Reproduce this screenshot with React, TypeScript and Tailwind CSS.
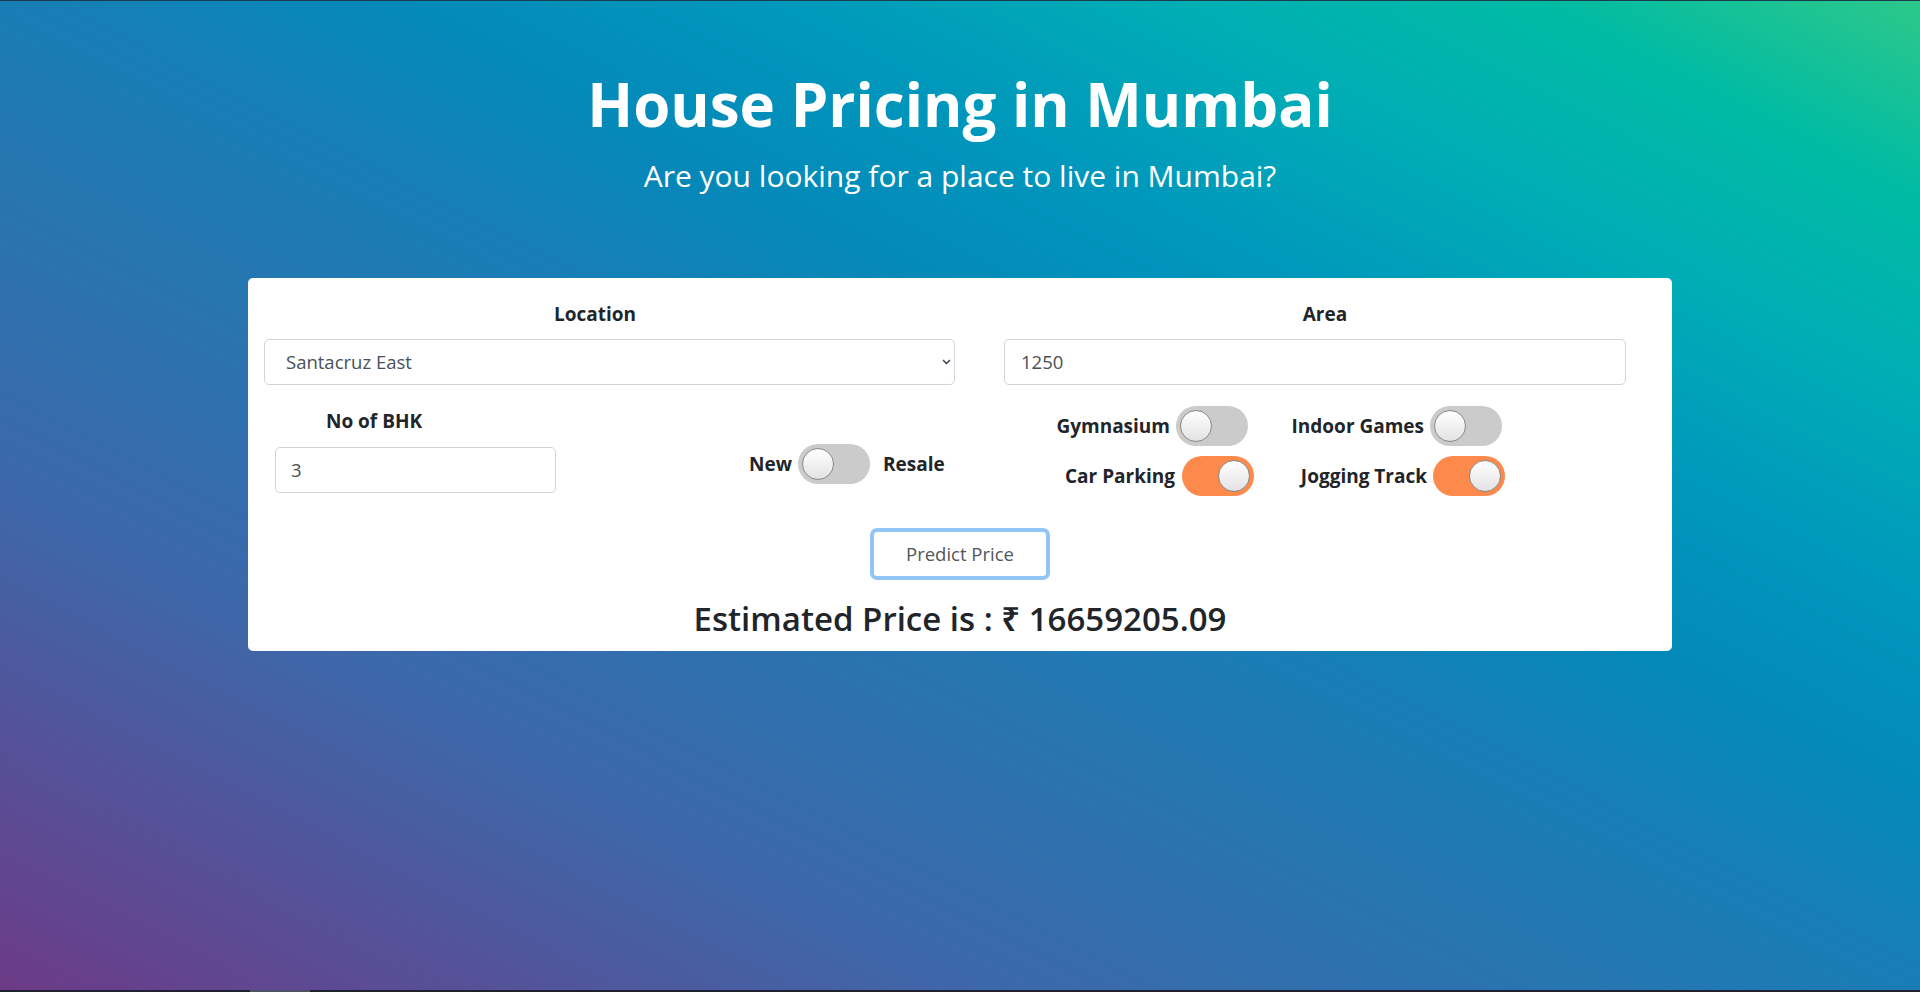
function Toggle({ on }: { on?: boolean }) {
  return (
    <div
      className={`flex h-[40px] w-[72px] shrink-0 items-center rounded-full px-[4px] ${
        on ? 'justify-end bg-[#fd894a]' : 'justify-start bg-[#cbcbcb]'
      }`}
    >
      <div className="h-[32px] w-[32px] rounded-full border border-[#8a8a8a] bg-linear-to-b from-white to-[#e3e3e3]" />
    </div>
  )
}

function Switch({ label, on, width, gap }: { label: string; on?: boolean; width: string; gap: string }) {
  return (
    <div className={`flex items-center justify-end ${width} ${gap}`}>
      <span className="text-[19px] leading-[24px] font-bold text-[#212529]">{label}</span>
      <Toggle on={on} />
    </div>
  )
}

export default function App() {
  return (
    <div className="flex h-screen min-h-[992px] w-full flex-col bg-[linear-gradient(to_top_right,#6d3a87_0%,#3e67a9_25%,#1a7db5_50%,#0489b9_60%,#0098bc_70%,#00adb5_80%,#00bba4_90%,#2dc88a_100%)] font-['Open_Sans','Noto_Sans',sans-serif]">
      <div className="h-px w-full bg-[#1b3c4c]" />

      <main className="flex flex-1 flex-col items-center">
        <h1 className="mt-[67px] text-[60px] leading-[72px] font-bold text-white">House Pricing in Mumbai</h1>
        <p className="mt-[18px] text-[30px] leading-[36px] text-white">Are you looking for a place to live in Mumbai?</p>

        <div className="mt-[84px] w-[1424px] rounded-[5px] bg-white px-4 pt-[24px] pb-[12px]">
          <div className="grid grid-cols-2 gap-x-[68px]">
            {/* Location + BHK + New/Resale */}
            <div>
              <div className="text-center text-[19px] leading-[24px] font-bold text-[#212529]">Location</div>
              <div className="mt-[13px] flex h-[46px] w-[691px] items-center justify-between rounded-[5px] border border-[#ced4da] bg-white pr-[3px] pl-[21px] text-[18.5px] text-[#495057]">
                <span>Santacruz East</span>
                <svg width="9" height="6" viewBox="0 0 9 6" fill="none">
                  <path d="M1 1l3.5 3.5L8 1" stroke="#3a3f44" strokeWidth="1.4" />
                </svg>
              </div>

              <div className="mt-[24px] flex">
                <div className="w-[292px]">
                  <div className="w-[220px] text-center text-[19px] leading-[24px] font-bold text-[#212529]">No of BHK</div>
                  <div className="mt-[14px] ml-[11px] flex h-[46px] w-[281px] items-center rounded-[5px] border border-[#ced4da] pl-[15px] text-[18.5px] text-[#495057]">
                    3
                  </div>
                </div>
                <div className="mt-[35px] flex h-[40px] items-center">
                  <Switch label="New" width="w-[314px]" gap="gap-[6px]" />
                  <span className="ml-[13px] text-[19px] leading-[24px] font-bold text-[#212529]">Resale</span>
                </div>
              </div>
            </div>

            {/* Area + amenities */}
            <div>
              <div className="text-center text-[19px] leading-[24px] font-bold text-[#212529]">Area</div>
              <div className="mt-[13px] ml-[10px] flex h-[46px] w-[622px] items-center rounded-[5px] border border-[#ced4da] pl-[16px] text-[18.5px] text-[#495057]">
                1250
              </div>

              <div className="mt-[21px] flex flex-col gap-[10px]">
                <div className="flex">
                  <Switch label="Gymnasium" width="w-[254px]" gap="gap-[6px]" />
                  <Switch label="Indoor Games" width="w-[254px]" gap="gap-[6px]" />
                </div>
                <div className="flex">
                  <Switch label="Car Parking" on width="w-[260px]" gap="gap-[7px]" />
                  <Switch label="Jogging Track" on width="w-[251px]" gap="gap-[6px]" />
                </div>
              </div>
            </div>
          </div>

          <div className="mt-[32px] flex justify-center">
            <button className="h-[52px] w-[180px] rounded-[7px] border-[4px] border-[#93c4f8] bg-white text-[18.5px] text-[#51575d]">
              Predict Price
            </button>
          </div>

          <div className="mt-[19px] text-center text-[33px] leading-[40px] font-semibold text-[#212529]">
            Estimated Price is : ₹ 16659205.09
          </div>
        </div>
      </main>

      <div className="flex h-[2px] w-full bg-[#1f2130]">
        <div className="ml-[250px] w-[60px] bg-[#4f5262]" />
      </div>
    </div>
  )
}
